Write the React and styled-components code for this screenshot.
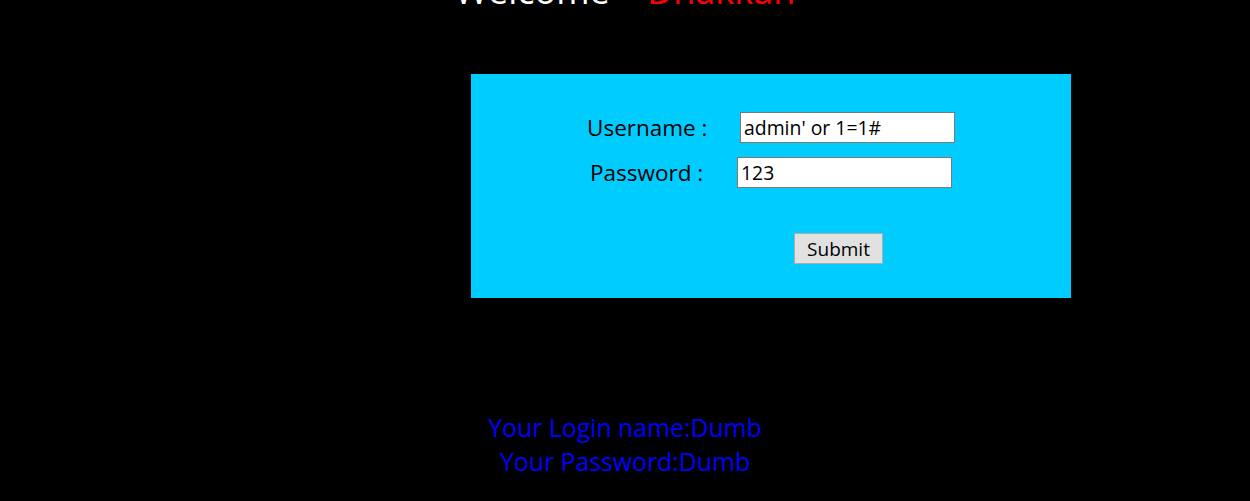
import React from 'react';
import styled, { createGlobalStyle } from 'styled-components';

const GlobalStyle = createGlobalStyle`
  html, body {
    margin: 0;
    padding: 0;
    background: #000;
    font-family: "Open Sans", "Noto Sans", sans-serif;
    overflow: hidden;
  }
`;

const Page = styled.div`
  width: 1250px;
  height: 501px;
  background: #000;
  overflow: hidden;
`;

const Title = styled.div`
  margin-top: -33px;
  height: 48px;
  text-align: center;
  font-size: 36px;
  line-height: 48px;
  color: #fff;
  white-space: pre;
`;

const Red = styled.span`
  color: #ff0000;
`;

const FormBox = styled.div`
  margin: 59px 0 0 471px;
  width: 600px;
  height: 224px;
  background: #00ccff;
  box-sizing: border-box;
  padding-top: 34px;
`;

const Row = styled.div`
  display: flex;
  align-items: center;
  height: ${p => p.h}px;
`;

const Label = styled.div`
  width: ${p => p.w}px;
  margin-left: ${p => p.left}px;
  font-size: 22.5px;
  color: #000;
`;

const Input = styled.input`
  width: 215px;
  height: 31px;
  box-sizing: border-box;
  border: 1px solid #7a7a7a;
  background: #fff;
  font-family: "Open Sans", "Noto Sans", sans-serif;
  font-size: 19.4px;
  padding: 0 3px;
  color: #000;
  outline: none;
`;

const ButtonRow = styled.div`
  display: flex;
  padding-left: 323px;
  margin-top: 35px;
`;

const Button = styled.button`
  width: 89px;
  height: 31px;
  box-sizing: border-box;
  background: #e1e1e1;
  border: 1px solid #adadad;
  font-family: "Open Sans", "Noto Sans", sans-serif;
  font-size: 19px;
  color: #000;
  padding: 0;
`;

const Result = styled.div`
  margin-top: 112px;
  text-align: center;
  color: #0000ff;
  font-size: 24.8px;
  line-height: 34px;
`;

export default function App() {
  return (
    <Page>
      <GlobalStyle />
      <Title>
        {'Welcome    '}
        <Red>Dhakkan</Red>
      </Title>
      <FormBox>
        <Row h={38}>
          <Label left={116} w={153}>Username :</Label>
          <Input defaultValue="admin' or 1=1#" />
        </Row>
        <Row h={52}>
          <Label left={119} w={147}>Password :</Label>
          <Input defaultValue="123" />
        </Row>
        <ButtonRow>
          <Button>Submit</Button>
        </ButtonRow>
      </FormBox>
      <Result>
        Your Login name:Dumb
        <br />
        Your Password:Dumb
      </Result>
    </Page>
  );
}
